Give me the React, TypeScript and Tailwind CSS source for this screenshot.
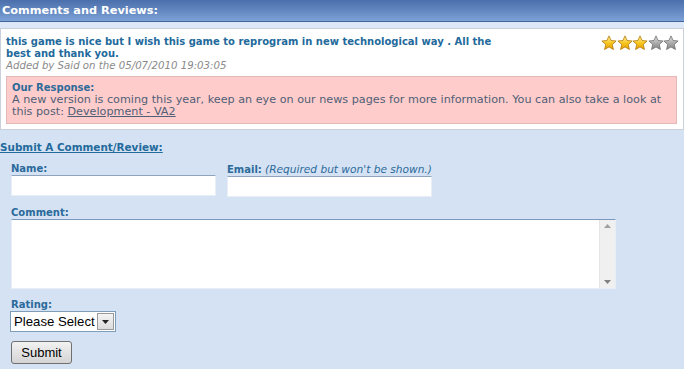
import React from 'react';

const Star = ({ on }: { on: boolean }) => (
  <svg width="16" height="16" viewBox="0 0 16 16" className="-mr-[0.4px]">
    <defs>
      <linearGradient id={on ? 'sg-on' : 'sg-off'} x1="0" y1="0" x2="0" y2="1">
        {on ? (
          <>
            <stop offset="0" stopColor="#fff3a0" />
            <stop offset="0.55" stopColor="#f7c51c" />
            <stop offset="1" stopColor="#e59a06" />
          </>
        ) : (
          <>
            <stop offset="0" stopColor="#e4e4e4" />
            <stop offset="0.55" stopColor="#a9a9a9" />
            <stop offset="1" stopColor="#858585" />
          </>
        )}
      </linearGradient>
    </defs>
    <path
      d="M8 0.9 L10.1 5.5 L15.1 6 L11.3 9.4 L12.4 14.5 L8 11.9 L3.6 14.5 L4.7 9.4 L0.9 6 L5.9 5.5 Z"
      fill={`url(#${on ? 'sg-on' : 'sg-off'})`}
      stroke={on ? '#b57a0a' : '#6e6e6e'}
      strokeWidth="0.8"
      strokeLinejoin="round"
    />
  </svg>
);

const App: React.FC = () => {
  return (
    <div className="w-[684px] h-[369px] overflow-hidden bg-[#d5e2f3] font-['DejaVu_Sans',sans-serif]">
      {/* Header */}
      <div className="h-[22px] bg-gradient-to-b from-[#4a6fab] to-[#7ca1d6] border-b border-[#42669c] px-[2px] text-[11.3px] leading-[22px] font-bold text-white">
        Comments and Reviews:
      </div>
      <div className="h-[6px] bg-[#dce7f7]" />

      {/* Review */}
      <div className="h-[102px] bg-white border border-[#c9d0da] pl-[5px] pr-[5px] pt-[7px]">
        <div className="flex justify-between">
          <div>
            <p className="text-[10px] leading-[12px] font-bold text-[#236a9c]">
              this game is nice but I wish this game to reprogram in new technological way . All the
              <br />
              best and thank you.
            </p>
            <p className="text-[10.2px] leading-[12px] italic text-[#8a8a8a]">Added by Said on the 05/07/2010 19:03:05</p>
          </div>
          <div className="flex -mr-[1px] -mt-[1px]">
            <Star on />
            <Star on />
            <Star on />
            <Star on={false} />
            <Star on={false} />
          </div>
        </div>
        <div className="mt-[4px] mr-[1px] h-[48px] bg-[#ffcccc] border border-[#e2b8b8] px-[5px] pt-[5px] text-[11.2px] leading-[12px] text-[#4f5f75]">
          <p className="font-bold text-[10px] text-[#2d6a98]">Our Response:</p>
          <p>
            A new version is coming this year, keep an eye on our news pages for more information. You can also take a look at
            <br />
            this post: <a href="#" className="underline">Development - VA2</a>
          </p>
        </div>
      </div>

      {/* Form */}
      <div className="pt-[11px]">
        <a href="#" className="block text-[10.4px] leading-[12px] font-bold underline text-[#236a9c]">
          Submit A Comment/Review:
        </a>
        <div className="pl-[11px] pt-[10px] text-[10px] leading-[12px] text-[#2b6a9b]">
          <div className="flex gap-[11px]">
            <div>
              <p className="font-bold">Name:</p>
              <input className="block w-[205px] h-[21px] bg-white border border-[#e8eef7] border-t-[#8fa3bd] outline-none" />
            </div>
            <div>
              <p>
                <span className="font-bold">Email:</span> <span className="italic text-[10.6px]">(Required but won't be shown.)</span>
              </p>
              <input className="block w-[205px] h-[21px] bg-white border border-[#e8eef7] border-t-[#8fa3bd] outline-none" />
            </div>
          </div>

          <p className="font-bold mt-[10px]">Comment:</p>
          <div className="flex w-[605px] h-[70px] bg-white border border-[#e8eef7] border-t-[#7b98bd]">
            <textarea className="flex-1 resize-none outline-none bg-white" />
            <div className="w-[16px] bg-[#f0f0f0] border-l border-[#e4e4e4] flex flex-col justify-between items-center py-[4px]">
              <svg width="7" height="4" viewBox="0 0 7 4"><path d="M0 4 L3.5 0 L7 4 Z" fill="#a0a0a0" /></svg>
              <svg width="7" height="4" viewBox="0 0 7 4"><path d="M0 0 L3.5 4 L7 0 Z" fill="#808080" /></svg>
            </div>
          </div>

          <p className="font-bold mt-[10px]">Rating:</p>
          <div className="-ml-[1px] inline-flex items-stretch h-[21px] bg-white border border-[#7f9db9] font-['Liberation_Sans',sans-serif] text-[13.2px] text-black">
            <select className="appearance-none bg-white outline-none pl-[3px] pr-[2px] leading-[19px]">
              <option>Please Select</option>
            </select>
            <span className="w-[17px] my-[1px] mr-[1px] flex items-center justify-center bg-gradient-to-b from-[#f4f4f4] to-[#dcdcdc] border border-[#9a9a9a]">
              <svg width="7" height="4" viewBox="0 0 7 4"><path d="M0 0 L3.5 4 L7 0 Z" fill="#222" /></svg>
            </span>
          </div>

          <div className="mt-[9px]">
            <button className="block w-[61px] h-[23px] rounded-[3px] border border-[#707070] bg-gradient-to-b from-[#f2f2f2] to-[#d4d4d4] font-['Liberation_Sans',sans-serif] text-[13px] text-black">
              Submit
            </button>
          </div>
        </div>
      </div>
    </div>
  );
};

export default App;
